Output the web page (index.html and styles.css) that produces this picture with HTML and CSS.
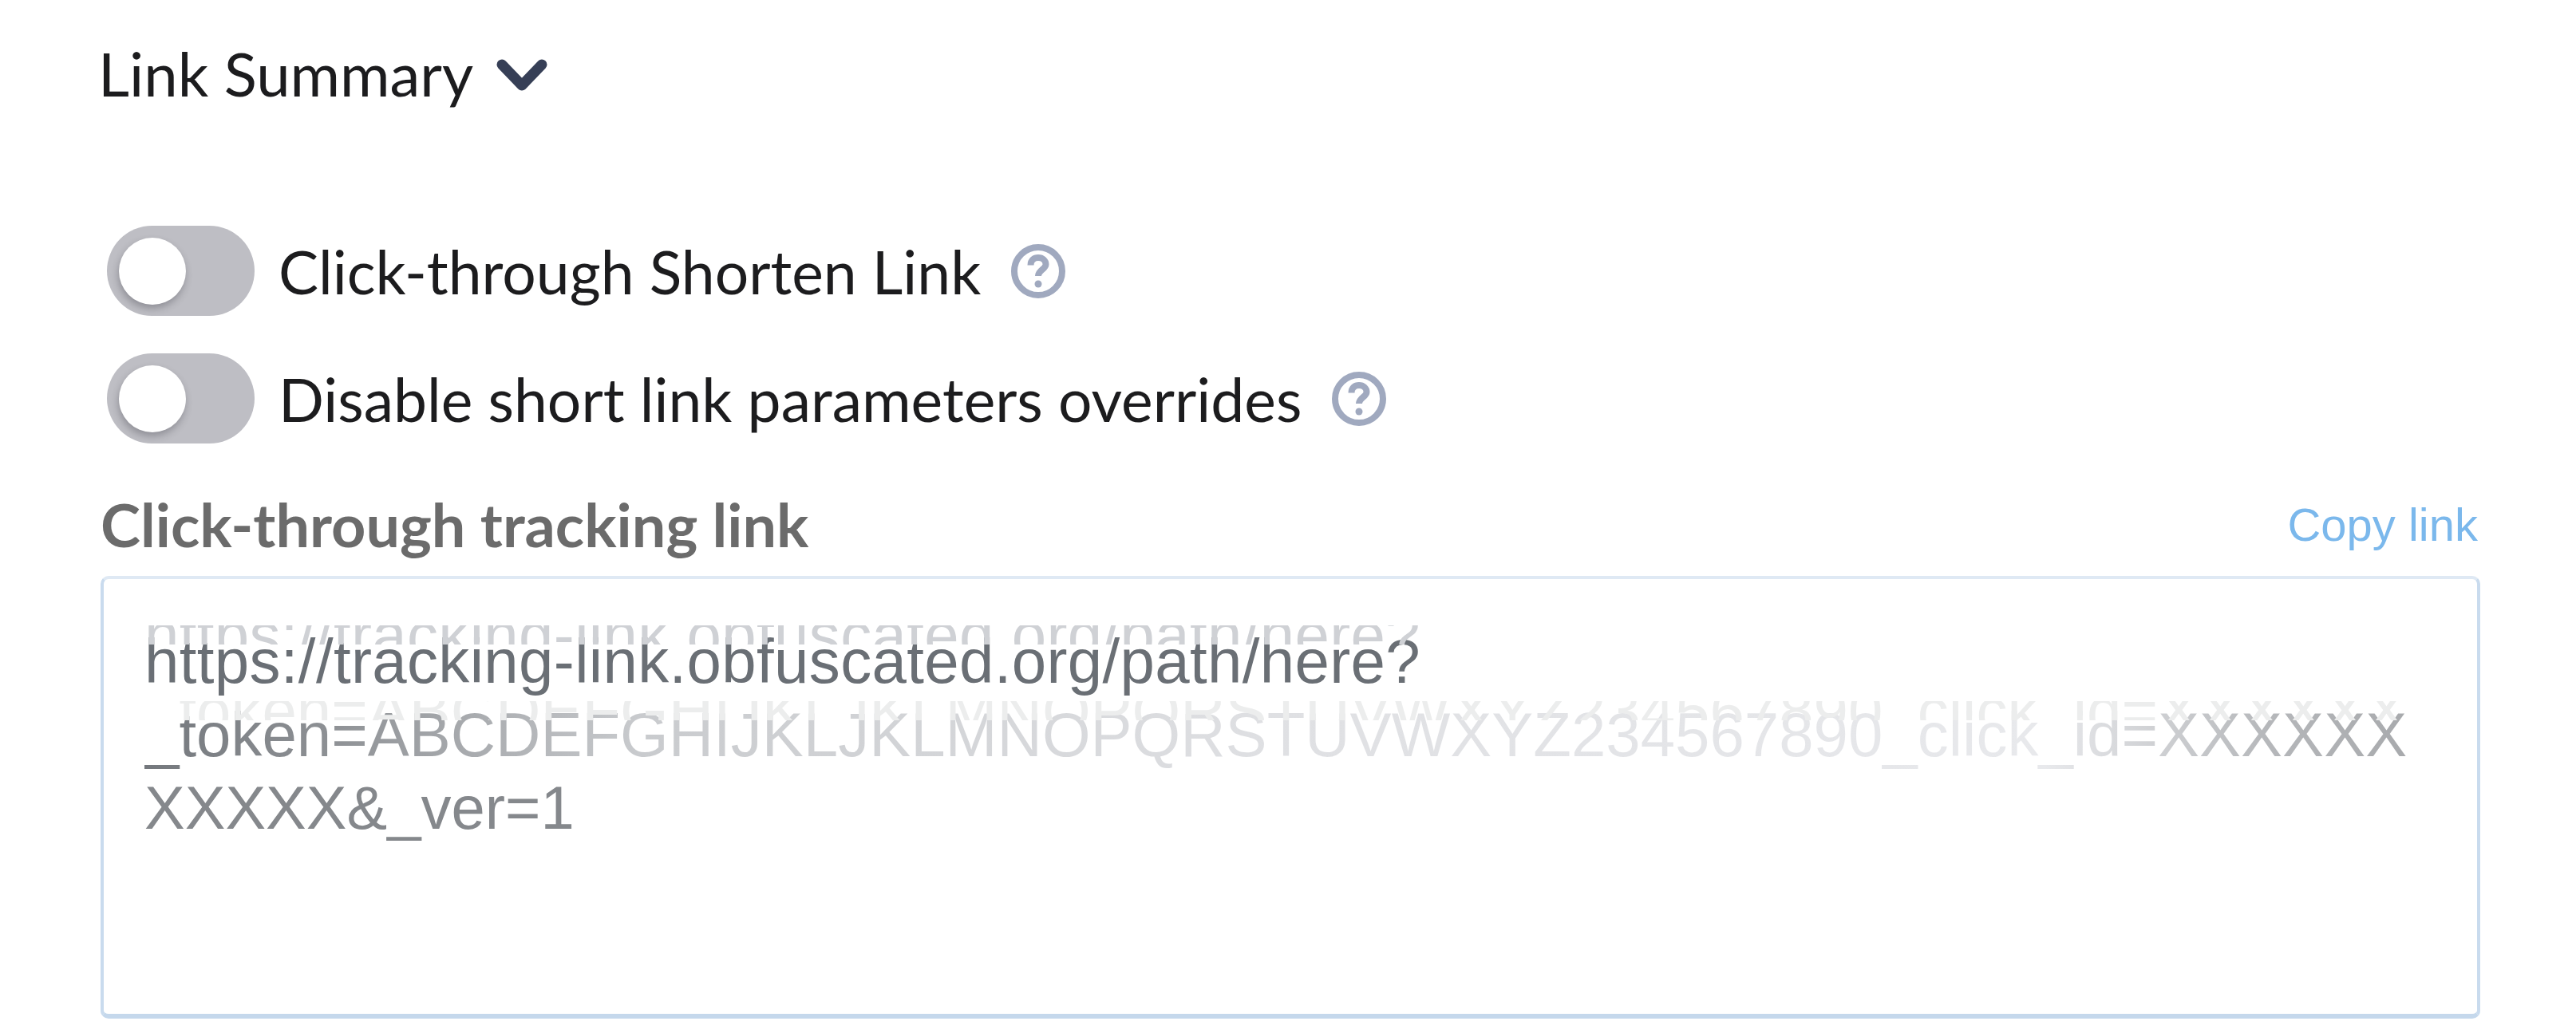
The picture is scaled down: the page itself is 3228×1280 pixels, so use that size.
FILE: index.html
```html
<!DOCTYPE html>
<html lang="en">
<head>
<meta charset="utf-8">
<title>Link Summary</title>
<link rel="stylesheet" href="styles.css">
</head>
<body>
<main class="page">
  <header class="summary">
    <h2 class="summary-title">Link Summary</h2>
    <svg class="chevron" viewBox="0 0 64 40" aria-hidden="true"><path d="M7 7 L32 33 L57 7"/></svg>
  </header>
  <section class="options">
    <div class="option">
      <span class="toggle"><span class="thumb"></span></span>
      <span class="option-label">Click-through Shorten Link</span>
      <svg class="help" viewBox="0 0 68 68" aria-hidden="true"><circle cx="34" cy="34" r="30"/><path d="M24.500 26.500 C24.500 20 29 17 34 17 C39.500 17 43.500 20.500 43.500 25.500 C43.500 31.500 34 32.500 34 40"/><circle class="dot" cx="34" cy="50" r="4.500"/></svg>
    </div>
    <div class="option">
      <span class="toggle"><span class="thumb"></span></span>
      <span class="option-label">Disable short link parameters overrides</span>
      <svg class="help" viewBox="0 0 68 68" aria-hidden="true"><circle cx="34" cy="34" r="30"/><path d="M24.500 26.500 C24.500 20 29 17 34 17 C39.500 17 43.500 20.500 43.500 25.500 C43.500 31.500 34 32.500 34 40"/><circle class="dot" cx="34" cy="50" r="4.500"/></svg>
    </div>
  </section>
  <section class="tracking">
    <div class="tracking-head">
      <span class="tracking-label">Click-through tracking link</span>
      <a class="copy">Copy link</a>
    </div>
    <div class="link-box">
      <span class="line line-one" data-ghost="https://tracking-link.obfuscated.org/path/here?">https://tracking-link.obfuscated.org/path/here?</span>
      <span class="line line-two" data-ghost="_token=ABCDEFGHIJKLJKLMNOPQRSTUVWXYZ234567890_click_id=XXXXXX">_token=ABCDEFGHIJKLJKLMNOPQRSTUVWXYZ234567890_click_id=XXXXXX</span>
      <span class="line line-three">XXXXX&amp;_ver=1</span>
    </div>
  </section>
</main>
</body>
</html>
```
FILE: styles.css
```css
* { box-sizing: border-box; }
html, body { margin: 0; background: #fff; }
body { width: 3228px; height: 1280px; overflow: hidden; font-family: "Lato", "Liberation Sans", sans-serif; color: #1c1c1e; }
.page { padding: 50px 120px 0 126px; }
.summary { display: flex; align-items: center; height: 84px; margin-left: -3px; }
.summary-title { margin: 0; font-size: 76px; font-weight: 400; line-height: 84px; }
.chevron { width: 64px; height: 40px; margin: 4px 0 0 29px; }
.chevron path { fill: none; stroke: #363f56; stroke-width: 13; stroke-linecap: round; stroke-linejoin: round; }
.options { display: flex; flex-direction: column; gap: 47px; margin-top: 149px; padding-left: 8px; }
.option { display: flex; align-items: center; height: 113px; }
.toggle { display: flex; align-items: center; width: 185px; height: 113px; padding-left: 15px; border-radius: 57px; background: #bebec4; flex: none; }
.thumb { width: 84px; height: 84px; border-radius: 50%; background: #fff; box-shadow: -1px 5px 10px rgba(40, 40, 50, .3); }
.option-label { margin-left: 30px; font-size: 75px; line-height: 84px; }
.help { width: 68px; height: 68px; margin-left: 38px; flex: none; }
.help circle { fill: none; stroke: #a0a9bf; stroke-width: 8; }
.help path { fill: none; stroke: #a0a9bf; stroke-width: 8; }
.help .dot { fill: #a0a9bf; stroke: none; }
.tracking { margin-top: 55px; }
.tracking-head { display: flex; justify-content: space-between; align-items: flex-start; height: 111px; padding-right: 3px; }
.tracking-label { font-size: 75.500px; font-weight: 700; line-height: 92px; color: #6b6b6b; }
.copy { margin-top: 11px; font-family: "Liberation Sans", sans-serif; font-size: 58px; line-height: 72px; color: #7bb8ec; }
.link-box { display: flex; flex-direction: column; width: 2982px; height: 555px; padding: 57px 0 0 51px; border: 4px solid #c9dbee; border-top-color: #dfe9f4; border-bottom: 6px solid #c5d8ec; border-radius: 10px; background: #fff; font-family: "Liberation Sans", sans-serif; font-size: 78px; line-height: 92px; }
.line { position: relative; display: block; white-space: nowrap; }
.line-one { color: #6a6f75; letter-spacing: .35px; }
.line-one::before { content: attr(data-ghost); position: absolute; left: 0; top: -33px; height: 92px; color: #cfd1d5; clip-path: inset(34px 0 34px 0); }
.line-two { width: fit-content; color: transparent; background: linear-gradient(90deg, #74787d 0, #8d9094 8%, #c9cbce 22%, #dfe0e3 50%, #e8e9ec 84%, #b5b7ba 94%, #a8aaad 100%); -webkit-background-clip: text; background-clip: text; }
.line-two::before { content: attr(data-ghost); position: absolute; left: 0; top: -30px; height: 92px; color: #eceded; clip-path: inset(34px 0 34px 0); }
.line-three { color: #85888c; font-size: 76px; }
```
